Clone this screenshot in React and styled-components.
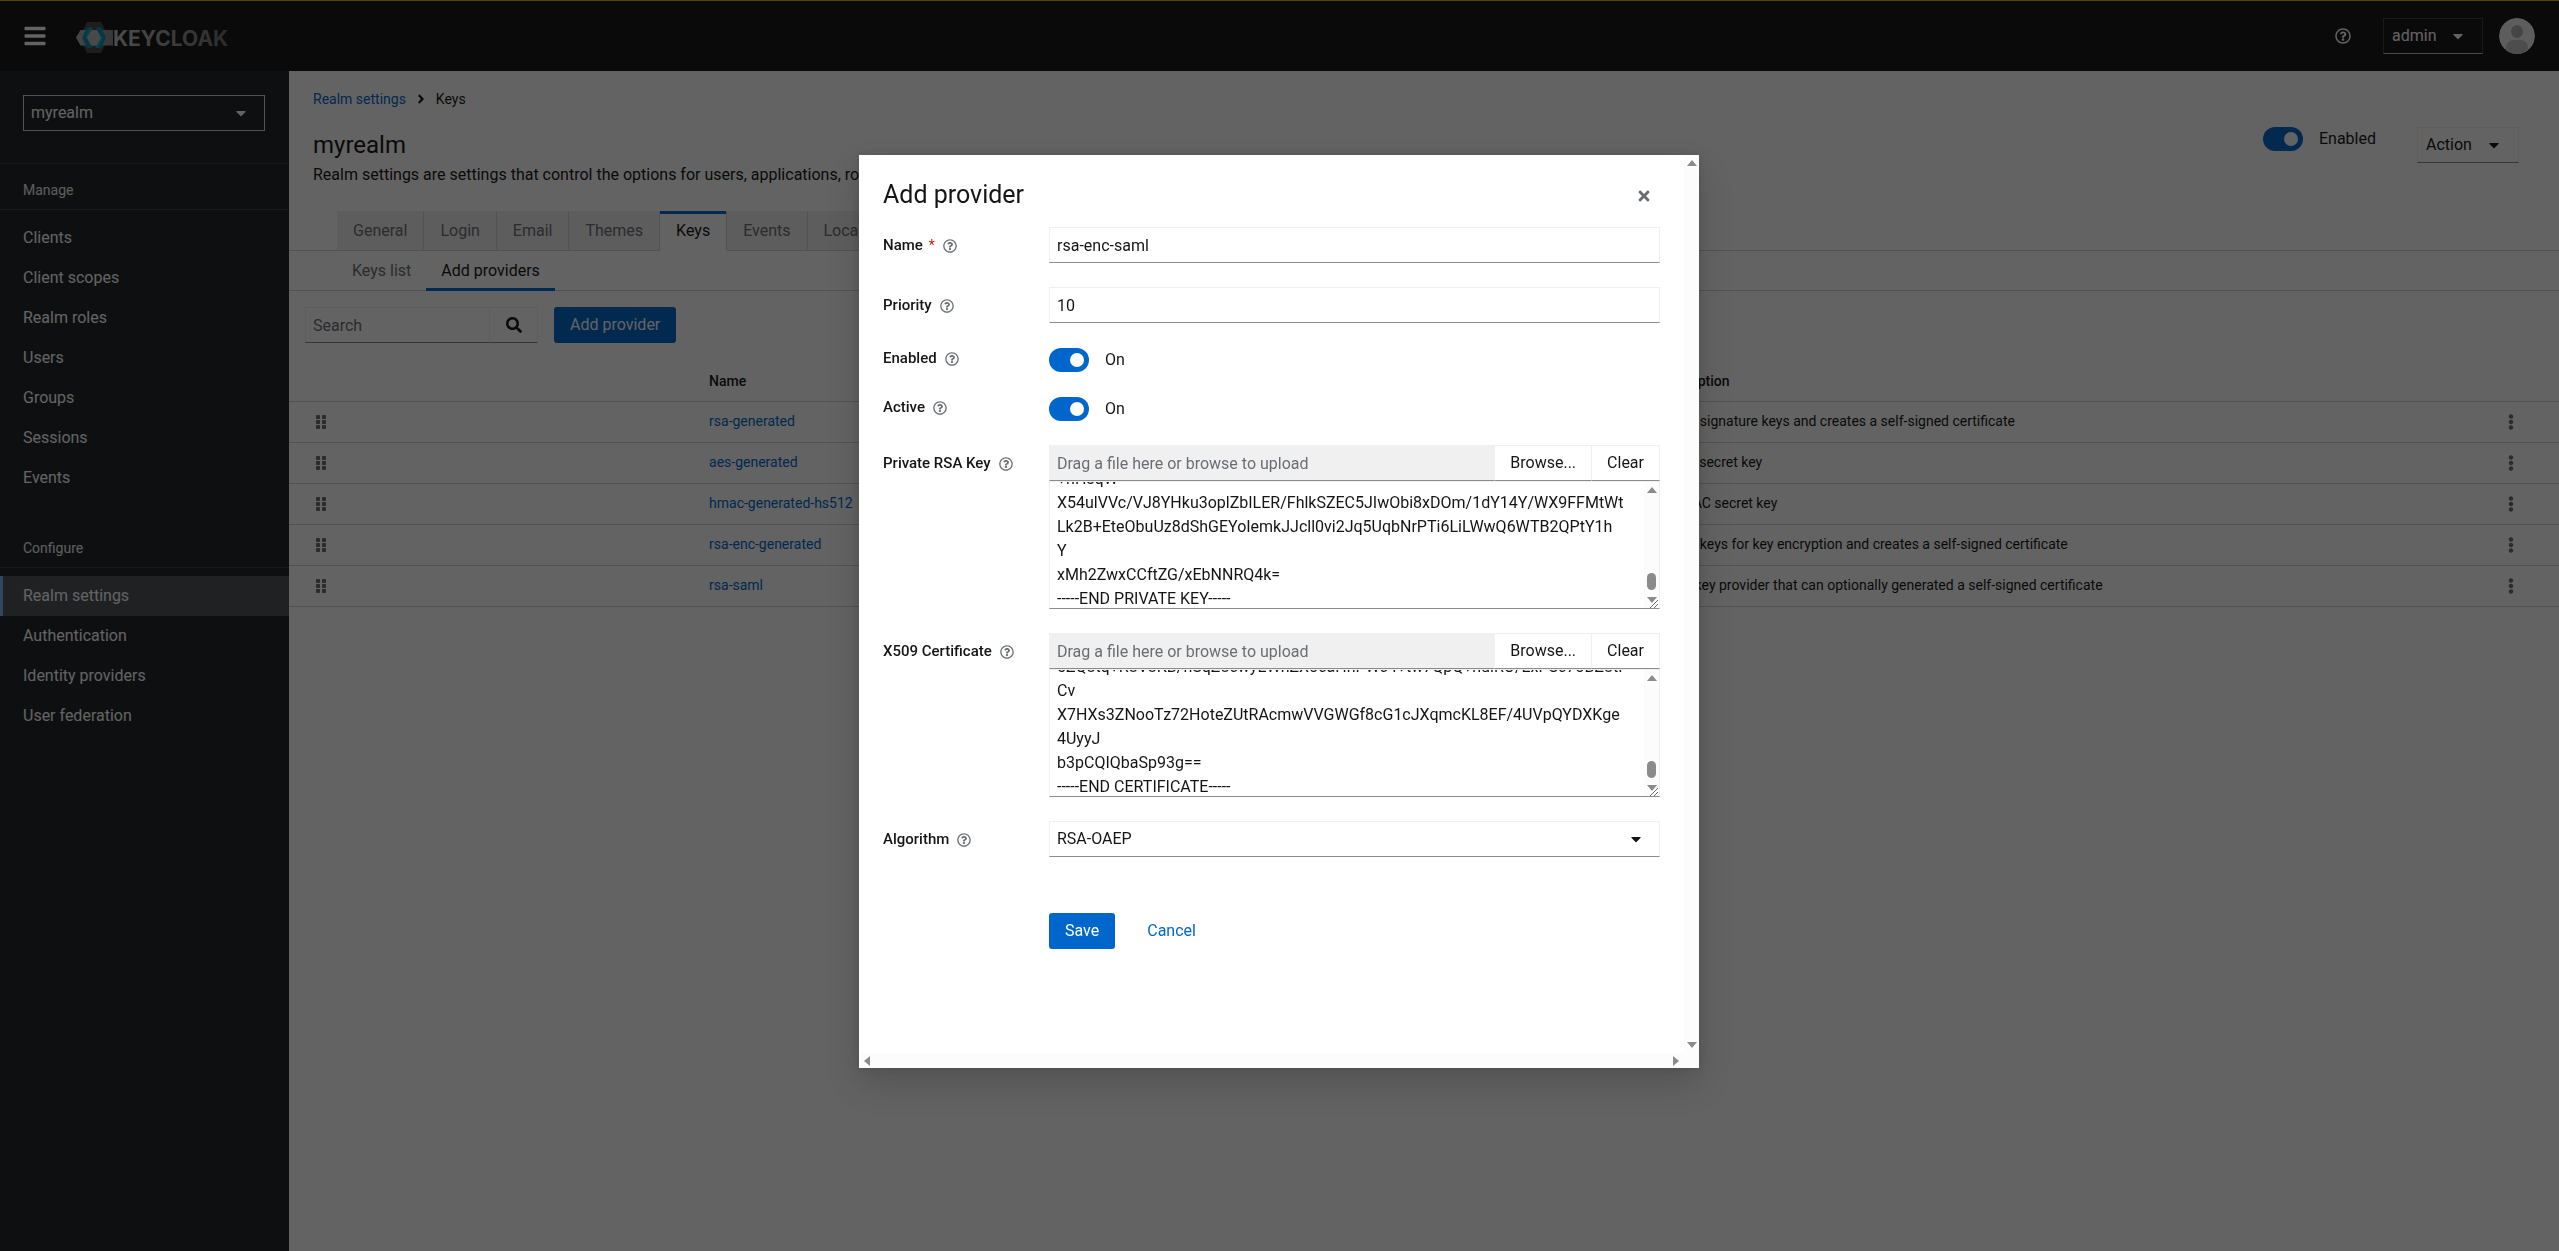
import React, { useEffect, useRef } from 'react';
import styled, { createGlobalStyle, css } from 'styled-components';
import {
    FaBars,
    FaAngleRight,
    FaCaretDown,
    FaEllipsisV,
    FaGripVertical,
    FaRegQuestionCircle,
    FaSearch,
    FaTimes,
} from 'react-icons/fa';

const GlobalStyle = createGlobalStyle`
    * {
        box-sizing: border-box;
    }
    body {
        margin: 0;
        font-family: Roboto, "Liberation Sans", sans-serif;
        font-size: 16px;
        line-height: 24px;
        color: #151515;
        background: #fff;
    }
    button, input, select, textarea {
        font: inherit;
        color: inherit;
        border-radius: 0;
        outline: none;
    }
    button {
        padding: 0;
        border: 0;
        background: none;
    }
    h1, h2, p, ul {
        margin: 0;
        padding: 0;
        font-weight: 400;
    }
    ul {
        list-style: none;
    }
    a {
        color: #06c;
        text-decoration: none;
    }
    svg {
        display: block;
        flex-shrink: 0;
    }
`;

const fieldBorder = css`
    border: 1px solid #f0f0f0;
    border-bottom-color: #8a8d90;
`;

const Page = styled.div`
    display: flex;
    flex-direction: column;
    min-height: 100vh;
`;

/* masthead */

const Masthead = styled.header`
    display: flex;
    align-items: center;
    height: 71px;
    padding: 0 24px 0 23px;
    background: #151515;
    border-top: 1px solid #f0ab00;
    color: #fff;
`;

const MenuToggle = styled.button`
    margin-right: 28px;
    font-size: 24px;
`;

const HelpButton = styled.button`
    margin: 0 32px 0 auto;
`;

const DropdownToggle = styled.button`
    ${fieldBorder}
    display: flex;
    align-items: center;
    justify-content: space-between;
    width: ${props => props.$dark ? '100px' : '102px'};
    height: 36px;
    padding: 0 16px 0 8px;
    ${props => props.$dark && 'border-color: #3c3f42; border-bottom-color: #b8bbbe;'}
`;

const AvatarLink = styled.a`
    margin-left: 16px;
`;

/* sidebar */

const Body = styled.div`
    display: flex;
    flex: 1;
`;

const Sidebar = styled.nav`
    flex: 0 0 289px;
    background: #212427;
    color: #fff;
`;

const RealmPicker = styled.div`
    padding: 24px 24px 32px 23px;
    border-bottom: 1px solid #3c3f42;
`;

const SelectWrap = styled.div`
    position: relative;

    svg {
        position: absolute;
        right: 16px;
        top: 10px;
        pointer-events: none;
    }
`;

const RealmSelect = styled.select`
    appearance: none;
    display: block;
    width: 100%;
    height: 36px;
    padding: 0 7px;
    background: transparent;
    border: 1px solid #d2d2d2;
`;

const NavTitle = styled.h2`
    padding: 16px 24px 8px 23px;
    border-bottom: 1px solid #3c3f42;
    font-size: 14px;
    line-height: 21px;
    color: #f0f0f0;
`;

const NavList = styled.ul`
    padding: 8px 0 24px;
`;

const NavLink = styled.a`
    display: block;
    padding: 8px 20px;
    color: #fff;
    border-left: 3px solid ${props => props.$current ? '#73bcf7' : 'transparent'};
    background: ${props => props.$current ? '#4f5255' : 'none'};
`;

/* main page */

const Main = styled.main`
    flex: 1;
    min-width: 0;
`;

const Breadcrumb = styled.div`
    display: flex;
    align-items: center;
    gap: 8px;
    padding: 16px 24px;
    font-size: 14px;
`;

const PageHeader = styled.div`
    display: flex;
    justify-content: space-between;
    padding: 0 40px 24px 24px;
`;

const PageTitle = styled.h1`
    padding-top: 2px;
    margin-bottom: 2px;
    font-size: 24px;
    line-height: 32px;
`;

const PageActions = styled.div`
    display: flex;
    align-items: flex-start;
    gap: 41px;
`;

const Tabs = styled.div`
    display: flex;
    height: 40px;
    padding-left: 48px;
    box-shadow: inset 0 -1px #d2d2d2;
`;

const Tab = styled.button`
    padding: 0 16px;
    color: #6a6e73;
    background: #f0f0f0;
    border-right: 1px solid #d2d2d2;
    border-bottom: 1px solid #d2d2d2;

    ${props => props.$active && css`
        color: #151515;
        background: #fff;
        border-bottom-color: #fff;
        box-shadow: inset 0 3px #06c;
    `}
`;

const SubTab = styled.button`
    padding: 0 15px;
    color: ${props => props.$active ? '#151515' : '#6a6e73'};
    box-shadow: ${props => props.$active ? 'inset 0 -3px #06c' : 'none'};
`;

const Toolbar = styled.div`
    display: flex;
    gap: 16px;
    padding: 16px;
`;

const SearchGroup = styled.form`
    display: flex;
`;

const SearchInput = styled.input`
    ${fieldBorder}
    width: 185px;
    height: 36px;
    padding: 0 7px;
    background: none;

    &::placeholder {
        color: #6a6e73;
    }
`;

const SearchButton = styled.button`
    ${fieldBorder}
    width: 48px;
    padding-left: 16px;
    border-left: 0;
`;

const PrimaryButton = styled.button`
    height: 36px;
    padding: 0 16px;
    border-radius: 3px;
    background: #06c;
    color: #fff;
`;

const Table = styled.table`
    width: 100%;
    table-layout: fixed;
    border-collapse: collapse;
    font-size: 14px;
    line-height: 21px;
`;

const HeadCell = styled.th`
    width: ${props => props.$width || 'auto'};
    height: 42px;
    padding: 4px 16px 0;
    border-bottom: 1px solid #d2d2d2;
    text-align: left;
    font-weight: 500;
`;

const Cell = styled.td`
    height: 41px;
    padding: 0 16px;
    border-bottom: 1px solid #d2d2d2;
`;

const RowButton = styled.button`
    display: block;
    margin: ${props => props.$center ? '0 auto' : '0 8px'};
    color: #6a6e73;
    font-size: 16px;
`;

/* switch */

const SwitchLabel = styled.label`
    display: flex;
    align-items: center;
    gap: 16px;
`;

const SwitchInput = styled.input`
    appearance: none;
    width: 40px;
    height: 24px;
    margin: 0;
    padding: 5px;
    border-radius: 12px;
    background: #8a8d90;

    &::before {
        content: '';
        display: block;
        width: 14px;
        height: 14px;
        border-radius: 50%;
        background: #fff;
    }

    &:checked {
        background: #06c;
        padding-left: 21px;
    }
`;

/* modal */

const Backdrop = styled.div`
    position: fixed;
    inset: 0;
    display: flex;
    justify-content: center;
    align-items: flex-start;
    padding: 155px 1px 0 0;
    background: rgba(3, 3, 3, 0.62);
`;

const Modal = styled.div`
    display: grid;
    grid-template-columns: 1fr 15px;
    grid-template-rows: 1fr 15px;
    width: 840px;
    max-width: 100%;
    height: 73vh;
    background: #fff;
    box-shadow: 0 16px 32px rgba(3, 3, 3, 0.16), 0 0 8px rgba(3, 3, 3, 0.1);
`;

const ModalBody = styled.div`
    padding: 24px;
    overflow: hidden;
`;

const ModalHeader = styled.div`
    display: flex;
    align-items: center;
    justify-content: space-between;
    margin-bottom: 16px;
`;

const ModalTitle = styled.h2`
    font-size: 25px;
    line-height: 32px;
`;

const CloseButton = styled.button`
    padding: 10px 8px 8px;
    margin: -8px 0;
    color: #6a6e73;
`;

const Form = styled.form`
    display: grid;
    gap: 24px;
`;

const FormRow = styled.div`
    display: grid;
    grid-template-columns: 150px 1fr;
    gap: 16px;
`;

const LabelCell = styled.div`
    display: flex;
    align-items: center;
    align-self: start;
    gap: 8px;
    padding-top: ${props => props.$flush ? '0' : '7px'};
    font-size: 15px;
    line-height: 22px;
    font-weight: 500;
`;

const Required = styled.span`
    margin-left: 6px;
    color: #c9190b;
    font-size: 14px;
    font-weight: 400;
`;

const InfoButton = styled.button`
    padding-top: 2px;
    color: #6a6e73;
    font-size: 14px;
`;

const TextInput = styled.input`
    ${fieldBorder}
    width: 100%;
    height: 36px;
    padding: 0 7px;
`;

const SwitchRow = styled.div`
    display: flex;
    align-items: flex-end;
    height: 25px;
`;

const FileBar = styled.div`
    display: flex;
`;

const FileName = styled.input`
    flex: 1;
    min-width: 0;
    height: 36px;
    padding: 0 7px;
    background: #f0f0f0;
    ${fieldBorder}

    &::placeholder {
        color: #6a6e73;
    }
`;

const FileButton = styled.button`
    ${fieldBorder}
    border-left: 0;
    padding: 0 15px;
`;

const FileContent = styled.div`
    ${fieldBorder}
    display: flex;
    height: 128px;
`;

const KeyText = styled.textarea`
    flex: 1;
    min-width: 0;
    padding: 6px 7px;
    border: 0;
    resize: none;
    overflow: hidden;
    white-space: pre;
`;

const Rail = styled.div`
    display: flex;
    flex-direction: ${props => props.$horizontal ? 'row' : 'column'};
    align-items: center;
    justify-content: space-between;
    padding: ${props => props.$horizontal ? '0 5px' : '5px 0'};
    background: #fcfcfc;
`;

const TextRail = styled.div`
    display: flex;
    flex-direction: column;
    align-items: center;
    width: 15px;
    padding-top: 5px;
    background: #fcfcfc;
`;

const Thumb = styled.div`
    width: 9px;
    height: 17px;
    margin: auto 0 7px;
    border-radius: 5px;
    background: #8b8b8b;
`;

const ResizeHandle = styled.div`
    margin-top: -3px;
`;

const Corner = styled.div`
    background: #fcfcfc;
`;

const AlgorithmSelect = styled.select`
    ${fieldBorder}
    appearance: none;
    display: block;
    width: 100%;
    height: 36px;
    padding: 0 7px;
    background: #fff;
`;

const Actions = styled.div`
    display: flex;
    gap: 16px;
    padding: 32px 0 0 166px;
`;

const LinkButton = styled.button`
    height: 36px;
    padding: 0 16px;
    color: #06c;
`;

const manageItems = ['Clients', 'Client scopes', 'Realm roles', 'Users', 'Groups', 'Sessions', 'Events'];
const configureItems = ['Realm settings', 'Authentication', 'Identity providers', 'User federation'];

const tabs = [
    'General', 'Login', 'Email', 'Themes', 'Keys', 'Events', 'Localization', 'Security defenses',
    'Sessions', 'Tokens', 'Client policies', 'User registration',
];

const providers = [
    { name: 'rsa-generated', provider: 'rsa-generated', description: 'Generates RSA signature keys and creates a self-signed certificate' },
    { name: 'aes-generated', provider: 'aes-generated', description: 'Generates AES secret key' },
    { name: 'hmac-generated-hs512', provider: 'hmac-generated', description: 'Generates HMAC secret key' },
    { name: 'rsa-enc-generated', provider: 'rsa-enc-generated', description: 'Generates RSA keys for key encryption and creates a self-signed certificate' },
    { name: 'rsa-saml', provider: 'rsa', description: 'RSA signature key provider that can optionally generated a self-signed certificate' },
];

const privateKey = [
    '+nHsqW',
    'X54ulVVc/VJ8YHku3oplZbILER/FhlkSZEC5JIwObi8xDOm/1dY14Y/WX9FFMtWt',
    'Lk2B+EteObuUz8dShGEYoIemkJJcll0vi2Jq5UqbNrPTi6LiLWwQ6WTB2QPtY1h',
    'Y',
    'xMh2ZwxCCftZG/xEbNNRQ4k=',
    '-----END PRIVATE KEY-----',
].join('\n');

const certificate = [
    '5ZQ8tq+R8V8KB/nSqZ8cwyEWnZX3caHnPWc4+tw7QpQ+hdiRO/ExPSc73BZ8tP',
    'Cv',
    'X7HXs3ZNooTz72HoteZUtRAcmwVVGWGf8cG1cJXqmcKL8EF/4UVpQYDXKge',
    '4UyyJ',
    'b3pCQIQbaSp93g==',
    '-----END CERTIFICATE-----',
].join('\n');

const Logo = () => (
    <svg width="156" height="36" viewBox="0 0 156 36" role="img" aria-label="Keycloak">
        <defs>
            <linearGradient id="band" x1="0" x2="1" y1="0" y2="0">
                <stop offset="0" stopColor="#b4b4b4" />
                <stop offset="1" stopColor="#8c8c8c" />
            </linearGradient>
            <linearGradient id="word" x1="0" x2="1" y1="0" y2="0">
                <stop offset="0" stopColor="#c4c4c4" />
                <stop offset="1" stopColor="#6e6e6e" />
            </linearGradient>
        </defs>
        <path d="M12 4h14l8 15.5L26 35H12L4.500 19.500z" fill="#4b4b4b" />
        <path d="M5.500 12H38v15.500H5.500L1 19.500z" fill="url(#band)" />
        <path d="M14 12h10l4.500 7.800L24 27.500H14l-4.500-7.700z" fill="#bcbcbc" />
        <path d="M12 9.500h5.500l-5.700 10.200 5.700 10.300H12L7 19.700z" fill="#0d8fae" />
        <path d="M15 9.500h2.500l-5.700 10.200L10 19.700z" fill="#14a9cc" />
        <path d="M20.500 9.500H26l5 10.200L26 30h-5.500l5.700-10.300z" fill="#0d8fae" />
        <path d="M23 30h-2.500l5.700-10.300H28z" fill="#14a9cc" />
        <text x="38" y="27.500" fill="url(#word)" fontFamily="Inter, sans-serif" fontWeight="700" fontSize="21">KEYCLOAK</text>
    </svg>
);

const Avatar = () => (
    <svg width="36" height="36" viewBox="0 0 36 36">
        <defs>
            <clipPath id="avatar-clip"><circle cx="18" cy="18" r="18" /></clipPath>
        </defs>
        <g clipPath="url(#avatar-clip)">
            <circle cx="18" cy="18" r="18" fill="#f0f0f0" />
            <path d="M7 36v-6c0-5 3-8 7-8h8c4 0 7 3 7 8v6z" fill="#c6c6c6" />
            <path d="M11.500 30v6M24.500 30v6" stroke="#b4b4b4" strokeWidth="1" />
            <ellipse cx="18" cy="13.500" rx="6" ry="6.500" fill="#b0b0b0" />
        </g>
    </svg>
);

const arrowPaths = {
    up: 'M5 0l5 6H0z',
    down: 'M0 0h10L5 6z',
    left: 'M6 0v10L0 5z',
    right: 'M0 0l6 5-6 5z',
};

const Arrow = ({ to }) => {
    const upright = to === 'up' || to === 'down';
    return (
        <svg width={upright ? 10 : 6} height={upright ? 6 : 10}>
            <path d={arrowPaths[to]} fill="#8b8b8b" />
        </svg>
    );
};

const Resizer = () => (
    <svg width="15" height="8" viewBox="0 0 15 8">
        <path d="M6 8l8-8M10 8l4-4" stroke="#6a6a6a" strokeWidth="1" />
    </svg>
);

const Switch = ({ id, label }) => (
    <SwitchLabel htmlFor={id}>
        <SwitchInput type="checkbox" id={id} defaultChecked />
        {label}
    </SwitchLabel>
);

const Nav = ({ title, items, current }) => (
    <>
        <NavTitle>{title}</NavTitle>
        <NavList>
            {items.map(item => (
                <li key={item}>
                    <NavLink href="#" $current={item === current}>{item}</NavLink>
                </li>
            ))}
        </NavList>
    </>
);

const Field = ({ id, label, required, flush, children }) => (
    <FormRow>
        <LabelCell $flush={flush}>
            <label htmlFor={id}>{label}{required && <Required>*</Required>}</label>
            <InfoButton type="button" aria-label={'Help for ' + label}><FaRegQuestionCircle /></InfoButton>
        </LabelCell>
        {children}
    </FormRow>
);

const FileUpload = ({ id, value }) => {
    const text = useRef(null);

    useEffect(() => {
        text.current.scrollTop = 21;
    }, []);

    return (
        <div>
            <FileBar>
                <FileName readOnly placeholder="Drag a file here or browse to upload" aria-label="File name" />
                <FileButton type="button">Browse...</FileButton>
                <FileButton type="button">Clear</FileButton>
            </FileBar>
            <FileContent>
                <KeyText id={id} ref={text} defaultValue={value} spellCheck="false" />
                <TextRail>
                    <Arrow to="up" />
                    <Thumb />
                    <Arrow to="down" />
                    <ResizeHandle><Resizer /></ResizeHandle>
                </TextRail>
            </FileContent>
        </div>
    );
};

const AddProvider = () => (
    <Backdrop>
        <Modal role="dialog" aria-labelledby="modal-title">
            <ModalBody>
                <ModalHeader>
                    <ModalTitle id="modal-title">Add provider</ModalTitle>
                    <CloseButton aria-label="Close"><FaTimes /></CloseButton>
                </ModalHeader>
                <Form>
                    <Field id="name" label="Name" required>
                        <TextInput id="name" defaultValue="rsa-enc-saml" />
                    </Field>
                    <Field id="priority" label="Priority">
                        <TextInput id="priority" defaultValue="10" />
                    </Field>
                    <Field id="enabled" label="Enabled" flush>
                        <SwitchRow><Switch id="enabled" label="On" /></SwitchRow>
                    </Field>
                    <Field id="active" label="Active" flush>
                        <SwitchRow><Switch id="active" label="On" /></SwitchRow>
                    </Field>
                    <Field id="private-key" label="Private RSA Key">
                        <FileUpload id="private-key" value={privateKey} />
                    </Field>
                    <Field id="certificate" label="X509 Certificate">
                        <FileUpload id="certificate" value={certificate} />
                    </Field>
                    <Field id="algorithm" label="Algorithm">
                        <SelectWrap>
                            <AlgorithmSelect id="algorithm">
                                <option>RSA-OAEP</option>
                            </AlgorithmSelect>
                            <FaCaretDown />
                        </SelectWrap>
                    </Field>
                    <Actions>
                        <PrimaryButton type="button">Save</PrimaryButton>
                        <LinkButton type="button">Cancel</LinkButton>
                    </Actions>
                </Form>
            </ModalBody>
            <Rail>
                <Arrow to="up" />
                <Arrow to="down" />
            </Rail>
            <Rail $horizontal>
                <Arrow to="left" />
                <Arrow to="right" />
            </Rail>
            <Corner />
        </Modal>
    </Backdrop>
);

const App = () => {
    const rows = providers.map(item => (
        <tr key={item.name}>
            <Cell><RowButton aria-label="Drag row"><FaGripVertical /></RowButton></Cell>
            <Cell><a href="#">{item.name}</a></Cell>
            <Cell>{item.provider}</Cell>
            <Cell>{item.description}</Cell>
            <Cell><RowButton $center aria-label="Actions"><FaEllipsisV /></RowButton></Cell>
        </tr>
    ));

    return (
        <Page>
            <GlobalStyle />
            <Masthead>
                <MenuToggle aria-label="Toggle navigation"><FaBars /></MenuToggle>
                <Logo />
                <HelpButton aria-label="Help"><FaRegQuestionCircle /></HelpButton>
                <DropdownToggle $dark>admin<FaCaretDown /></DropdownToggle>
                <AvatarLink href="#" aria-label="Account"><Avatar /></AvatarLink>
            </Masthead>
            <Body>
                <Sidebar>
                    <RealmPicker>
                        <SelectWrap>
                            <RealmSelect aria-label="Realm">
                                <option>myrealm</option>
                            </RealmSelect>
                            <FaCaretDown />
                        </SelectWrap>
                    </RealmPicker>
                    <Nav title="Manage" items={manageItems} />
                    <Nav title="Configure" items={configureItems} current="Realm settings" />
                </Sidebar>
                <Main>
                    <Breadcrumb>
                        <a href="#">Realm settings</a>
                        <FaAngleRight />
                        <span>Keys</span>
                    </Breadcrumb>
                    <PageHeader>
                        <div>
                            <PageTitle>myrealm</PageTitle>
                            <p>
                                Realm settings are settings that control the options for users, applications,
                                roles, and groups in the current realm. <a href="#">Learn more</a>
                            </p>
                        </div>
                        <PageActions>
                            <Switch id="realm-enabled" label="Enabled" />
                            <DropdownToggle>Action<FaCaretDown /></DropdownToggle>
                        </PageActions>
                    </PageHeader>
                    <Tabs>
                        {tabs.map(tab => <Tab key={tab} $active={tab === 'Keys'}>{tab}</Tab>)}
                    </Tabs>
                    <Tabs>
                        <SubTab>Keys list</SubTab>
                        <SubTab $active>Add providers</SubTab>
                    </Tabs>
                    <Toolbar>
                        <SearchGroup>
                            <SearchInput placeholder="Search" aria-label="Search" />
                            <SearchButton type="button" aria-label="Search"><FaSearch /></SearchButton>
                        </SearchGroup>
                        <PrimaryButton>Add provider</PrimaryButton>
                    </Toolbar>
                    <Table>
                        <thead>
                            <tr>
                                <HeadCell $width="17.8%" />
                                <HeadCell $width="19.7%">Name</HeadCell>
                                <HeadCell $width="19.7%">Provider</HeadCell>
                                <HeadCell>Provider description</HeadCell>
                                <HeadCell $width="96px" />
                            </tr>
                        </thead>
                        <tbody>{rows}</tbody>
                    </Table>
                </Main>
            </Body>
            <AddProvider />
        </Page>
    );
};

export default App;
